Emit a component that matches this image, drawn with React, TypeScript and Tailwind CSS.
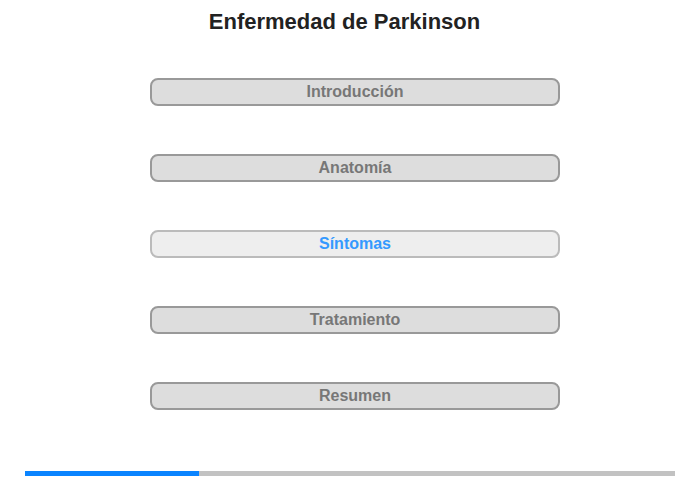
const sections = [
  { label: "Introducción", active: false },
  { label: "Anatomía", active: false },
  { label: "Síntomas", active: true },
  { label: "Tratamiento", active: false },
  { label: "Resumen", active: false },
];

export default function App() {
  return (
    <div className="h-[480px] w-[700px] bg-white font-['Liberation_Sans',Arial,sans-serif]">
      <h1 className="pr-[11px] pt-[9px] text-center text-[22px] font-bold leading-[26px] text-[#222]">
        Enfermedad de Parkinson
      </h1>
      <div className="mt-[43px] flex flex-col items-center gap-[48px] pl-[10px]">
        {sections.map((s) => (
          <button
            key={s.label}
            className={
              s.active
                ? "h-[28px] w-[410px] rounded-[8px] border-2 border-[#bbbbbb] bg-[#eeeeee] text-[16px] font-bold leading-[24px] text-[#3399ff]"
                : "h-[28px] w-[410px] rounded-[8px] border-2 border-[#999999] bg-[#dddddd] text-[16px] font-bold leading-[24px] text-[#777777]"
            }
          >
            {s.label}
          </button>
        ))}
      </div>
      <div className="mx-[25px] mt-[61px] flex h-[5px]">
        <div className="w-[174px] bg-[#0a84ff]" />
        <div className="flex-1 bg-[#c2c2c2]" />
      </div>
    </div>
  );
}
